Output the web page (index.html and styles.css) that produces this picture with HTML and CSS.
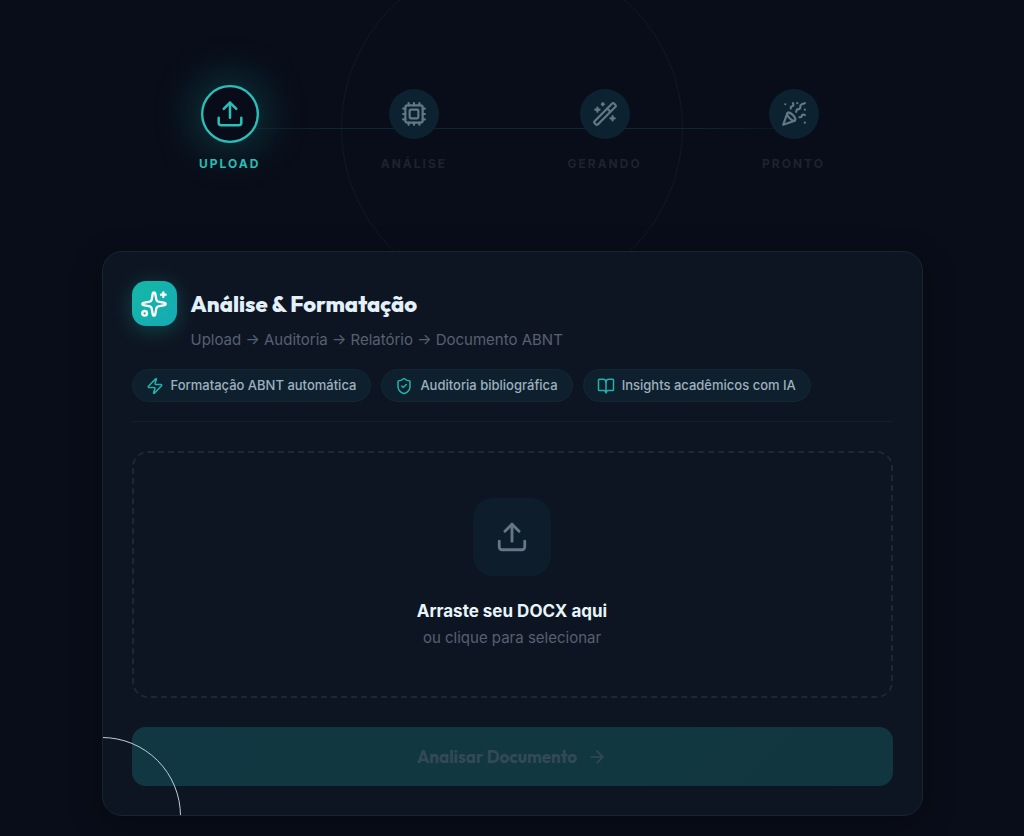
FILE: index.html
```
<!DOCTYPE html>
<html lang="pt-BR">

<head>
    <meta charset="UTF-8">
    <meta name="viewport" content="width=device-width, initial-scale=1.0">
    <title>Análise &amp; Formatação</title>
    <link rel="stylesheet" href="styles.css">
</head>

<body>

    <main class="page">
        <section class="progress">
            <div class="orbit"></div>
            <div class="track"></div>

            <ol class="steps">
                <li class="step active">
                    <div class="step-icon">
                        <svg class="icon" viewBox="0 0 24 24"><path d="M12 3v12"/><path d="m17 8-5-5-5 5"/><path d="M21 15v4a2 2 0 0 1-2 2H5a2 2 0 0 1-2-2v-4"/></svg>
                    </div>
                    <span class="step-label">UPLOAD</span>
                </li>
                <li class="step">
                    <div class="step-icon">
                        <svg class="icon" viewBox="0 0 24 24"><rect x="4" y="4" width="16" height="16" rx="2"/><rect x="8" y="8" width="8" height="8" rx="1"/><path d="M12 20v2M12 2v2M17 20v2M17 2v2M2 12h2M2 17h2M2 7h2M20 12h2M20 17h2M20 7h2M7 20v2M7 2v2"/></svg>
                    </div>
                    <span class="step-label">ANÁLISE</span>
                </li>
                <li class="step">
                    <div class="step-icon">
                        <svg class="icon" viewBox="0 0 24 24"><path d="m21.64 3.64-1.28-1.28a1.21 1.21 0 0 0-1.72 0L2.36 18.64a1.21 1.21 0 0 0 0 1.72l1.28 1.28a1.2 1.2 0 0 0 1.72 0L21.64 5.36a1.2 1.2 0 0 0 0-1.72"/><path d="m14 7 3 3M5 6v4M19 14v4M10 2v2M7 8H3M21 16h-4M11 3H9"/></svg>
                    </div>
                    <span class="step-label">GERANDO</span>
                </li>
                <li class="step">
                    <div class="step-icon">
                        <svg class="icon" viewBox="0 0 24 24"><path d="M5.8 11.3 2 22l10.7-3.79M4 3h.01M22 8h.01M15 2h.01M22 20h.01"/><path d="m22 2-2.24.75a2.9 2.9 0 0 0-1.96 3.12c.1.86-.57 1.63-1.45 1.63h-.38c-.86 0-1.6.6-1.76 1.44L14 10"/><path d="m22 13-.82-.33c-.86-.34-1.82.2-1.98 1.11c-.11.7-.72 1.22-1.43 1.22H17"/><path d="m11 2 .33.82c.34.86-.2 1.82-1.11 1.98C9.52 4.9 9 5.52 9 6.23V7"/><path d="M11 13c1.93 1.93 2.83 4.17 2 5-.83.83-3.07-.07-5-2-1.93-1.93-2.83-4.17-2-5 .83-.83 3.07.07 5 2Z"/></svg>
                    </div>
                    <span class="step-label">PRONTO</span>
                </li>
            </ol>
        </section>

        <form class="card">
            <header class="card-header">
                <div class="logo">
                    <svg class="icon" viewBox="0 0 24 24"><path d="M11.017 2.814a1 1 0 0 1 1.966 0l1.051 5.558a2 2 0 0 0 1.594 1.594l5.558 1.051a1 1 0 0 1 0 1.966l-5.558 1.051a2 2 0 0 0-1.594 1.594l-1.051 5.558a1 1 0 0 1-1.966 0l-1.051-5.558a2 2 0 0 0-1.594-1.594l-5.558-1.051a1 1 0 0 1 0-1.966l5.558-1.051a2 2 0 0 0 1.594-1.594z"/><path d="M20 2v4M22 4h-4"/><circle cx="4" cy="20" r="2"/></svg>
                </div>
                <h1>Análise &amp; Formatação</h1>
                <p class="subtitle">Upload → Auditoria → Relatório → Documento ABNT</p>
            </header>

            <ul class="features">
                <li>
                    <svg class="icon" viewBox="0 0 24 24"><path d="M4 14a1 1 0 0 1-.78-1.63l9.9-10.2a.5.5 0 0 1 .86.46l-1.92 6.02A1 1 0 0 0 13 10h7a1 1 0 0 1 .78 1.63l-9.9 10.2a.5.5 0 0 1-.86-.46l1.92-6.02A1 1 0 0 0 11 14z"/></svg>
                    Formatação ABNT automática
                </li>
                <li>
                    <svg class="icon" viewBox="0 0 24 24"><path d="M20 13c0 5-3.5 7.5-7.66 8.95a1 1 0 0 1-.67-.01C7.5 20.5 4 18 4 13V6a1 1 0 0 1 1-1c2 0 4.5-1.2 6.24-2.72a1.17 1.17 0 0 1 1.52 0C14.51 3.81 17 5 19 5a1 1 0 0 1 1 1z"/><path d="m9 12 2 2 4-4"/></svg>
                    Auditoria bibliográfica
                </li>
                <li>
                    <svg class="icon" viewBox="0 0 24 24"><path d="M12 7v14"/><path d="M3 18a1 1 0 0 1-1-1V4a1 1 0 0 1 1-1h5a4 4 0 0 1 4 4 4 4 0 0 1 4-4h5a1 1 0 0 1 1 1v13a1 1 0 0 1-1 1h-6a3 3 0 0 0-3 3 3 3 0 0 0-3-3z"/></svg>
                    Insights acadêmicos com IA
                </li>
            </ul>

            <label class="dropzone" for="docx-file">
                <input type="file" id="docx-file" accept=".docx">
                <span class="drop-icon">
                    <svg class="icon" viewBox="0 0 24 24"><path d="M12 3v12"/><path d="m17 8-5-5-5 5"/><path d="M21 15v4a2 2 0 0 1-2 2H5a2 2 0 0 1-2-2v-4"/></svg>
                </span>
                <span class="drop-title">Arraste seu DOCX aqui</span>
                <span class="drop-hint">ou clique para selecionar</span>
            </label>

            <button type="submit" class="submit" disabled>
                Analisar Documento
                <svg class="icon" viewBox="0 0 24 24"><path d="M5 12h14"/><path d="m12 5 7 7-7 7"/></svg>
            </button>

            <div class="corner-ring"></div>
        </form>
    </main>

</body>

</html>
```
FILE: styles.css
```
* {
    box-sizing: border-box;
}

body {
    margin: 0;
    min-height: 100vh;
    font-family: Inter, "Liberation Sans", sans-serif;
    background-color: #090d19;
    color: #e2f0fa;
}

h1, p, ol, ul {
    margin: 0;
    padding: 0;
}

ol, ul {
    list-style: none;
}

.icon {
    display: block;
    flex-shrink: 0;
    fill: none;
    stroke: currentColor;
    stroke-width: 2;
    stroke-linecap: round;
    stroke-linejoin: round;
}

.page {
    max-width: 821px;
    margin: 0 auto;
    padding-bottom: 20px;
}

/* progress steps */
.progress {
    position: relative;
    padding: 89px 0 79px;
    overflow: hidden;
}

.orbit {
    position: absolute;
    top: 128px;
    left: 50%;
    width: 342px;
    height: 342px;
    border: 1px solid #101924;
    border-radius: 50%;
    transform: translate(-50%, -50%);
}

.track {
    position: absolute;
    top: 128px;
    left: 12%;
    right: 12%;
    height: 1px;
    background: linear-gradient(90deg, transparent, #0c2831 20%, #0c2831 80%, transparent);
}

.steps {
    position: relative;
    display: flex;
    justify-content: space-between;
    max-width: 626px;
    margin: 0 auto;
}

.step {
    display: flex;
    flex-direction: column;
    align-items: center;
    gap: 17px;
    color: #62788a;
}

.step-icon {
    display: flex;
    align-items: center;
    justify-content: center;
    width: 50px;
    height: 50px;
    border-radius: 50%;
    background-color: #0d2231;
}

.step-icon .icon {
    width: 26px;
    height: 26px;
}

.step-label {
    font-size: 12px;
    line-height: 16px;
    font-weight: 700;
    letter-spacing: 2px;
    color: #1c2330;
}

.active .step-icon {
    border: 2px solid #2abfb8;
    background-color: #080c18;
    color: #2abfb8;
    box-shadow: 0 0 40px rgba(20, 184, 176, 0.4);
    transform: scale(1.16);
}

.active .step-label {
    color: #2abfb8;
}

/* main card */
.card {
    position: relative;
    padding: 29px;
    border: 1px solid #19252f;
    border-radius: 20px;
    background-color: #0e1522;
    box-shadow: 0 8px 32px rgba(0, 0, 0, 0.3);
    overflow: hidden;
}

.card-header {
    display: grid;
    grid-template-columns: 45px 1fr;
    column-gap: 14px;
    row-gap: 3px;
    align-items: center;
}

.logo {
    display: flex;
    align-items: center;
    justify-content: center;
    width: 45px;
    height: 45px;
    border-radius: 14px;
    background: linear-gradient(135deg, #14b8a6, #16aab5);
    color: #fff;
    box-shadow: 0 4px 20px rgba(20, 184, 176, 0.3);
}

.logo .icon {
    width: 28px;
    height: 28px;
}

h1 {
    font-family: Outfit, Lato, sans-serif;
    font-size: 22px;
    line-height: 30px;
    font-weight: 800;
}

.subtitle {
    grid-column: 2;
    font-size: 15px;
    line-height: 22px;
    color: #566071;
}

.features {
    display: flex;
    flex-wrap: wrap;
    gap: 10px;
    padding: 18px 0 19px;
    margin-bottom: 29px;
    border-bottom: 1px solid #12202a;
}

.features li {
    display: flex;
    align-items: center;
    gap: 7px;
    padding: 6px 14px 6px 13px;
    border: 1px solid #132833;
    border-radius: 17px;
    background-color: #0e202d;
    font-size: 13px;
    line-height: 19px;
    font-weight: 500;
    color: #9eb0bf;
}

.features .icon {
    width: 18px;
    height: 18px;
    color: #1fb2ad;
}

.dropzone {
    display: flex;
    flex-direction: column;
    align-items: center;
    padding: 45px 20px 47px;
    border: 2px dashed #1f2732;
    border-radius: 16px;
    cursor: pointer;
}

.dropzone input {
    position: absolute;
    width: 1px;
    height: 1px;
    opacity: 0;
}

.drop-icon {
    display: flex;
    align-items: center;
    justify-content: center;
    width: 78px;
    height: 78px;
    margin-bottom: 22px;
    border-radius: 20px;
    background-color: #0d1d2b;
    color: #657686;
}

.drop-icon .icon {
    width: 34px;
    height: 34px;
}

.drop-title {
    font-size: 17px;
    line-height: 26px;
    font-weight: 700;
    color: #e8f5fb;
}

.drop-hint {
    margin-top: 3px;
    font-size: 15px;
    line-height: 22px;
    color: #566071;
}

.submit {
    display: flex;
    align-items: center;
    justify-content: center;
    gap: 10px;
    width: 100%;
    height: 59px;
    margin-top: 29px;
    border: none;
    border-radius: 14px;
    background: linear-gradient(135deg, #113842, #11363f);
    font-family: Outfit, Lato, sans-serif;
    font-size: 17px;
    font-weight: 700;
    color: #334958;
}

.submit .icon {
    width: 20px;
    height: 20px;
}

.corner-ring {
    position: absolute;
    left: -80px;
    bottom: -80px;
    width: 158px;
    height: 158px;
    border: 1px solid #bcced9;
    border-radius: 50%;
    pointer-events: none;
}
```
